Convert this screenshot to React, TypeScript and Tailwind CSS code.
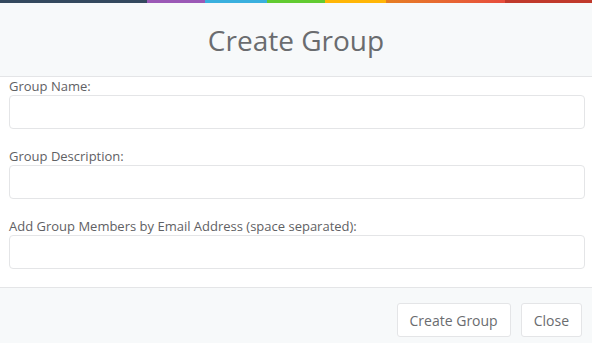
import React from "react";

const stripe = [
  { w: "w-[147px]", c: "bg-[#34495e]" },
  { w: "w-[58px]", c: "bg-[#9b59b6]" },
  { w: "w-[62px]", c: "bg-[#3ab0de]" },
  { w: "w-[58px]", c: "bg-[#62cb31]" },
  { w: "w-[61px]", c: "bg-[#ffb606]" },
];

function Field({ label }: { label: string }) {
  return (
    <div className="mb-[18px]">
      <label className="block text-[13px] leading-[18px] text-[#5f6164]">{label}</label>
      <input
        type="text"
        className="block w-full h-[34px] rounded-[4px] border border-[#e4e5e7] bg-white px-3 text-[13px] outline-none"
      />
    </div>
  );
}

export default function App() {
  return (
    <div className="w-[592px] h-[343px] bg-white overflow-hidden font-['Open_Sans',sans-serif] text-[#6a6c6f]">
      <div className="flex h-[3px]">
        {stripe.map((s, i) => (
          <div key={i} className={`${s.w} ${s.c}`} />
        ))}
        <div className="w-[119px] bg-gradient-to-r from-[#e67e22] to-[#e74c3c]" />
        <div className="flex-1 bg-[#c0392b]" />
      </div>
      <div className="h-[74px] bg-[#f7f9fa] border-b border-[#e4e5e7] flex items-center justify-center">
        <h4 className="text-[28px] font-normal leading-none">Create Group</h4>
      </div>
      <div className="pl-[9px] pr-[7px]">
        <Field label="Group Name:" />
        <Field label="Group Description:" />
        <Field label="Add Group Members by Email Address (space separated):" />
      </div>
      <div className="h-[56px] border-t border-[#e4e5e7] bg-[#f7f9fa] flex justify-end items-start gap-[10px] pt-[15px] pr-[10px]">
        <button className="h-[34px] px-[12px] rounded-[3px] border border-[#e4e5e7] bg-white text-[14px] text-[#6a6c6f]">
          Create Group
        </button>
        <button className="h-[34px] px-[12px] rounded-[3px] border border-[#e4e5e7] bg-white text-[14px] text-[#6a6c6f]">
          Close
        </button>
      </div>
    </div>
  );
}
